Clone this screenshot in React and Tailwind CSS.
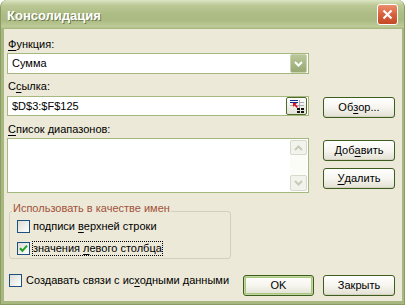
import React from "react";

function Mn({ children }) {
  return <span className="underline underline-offset-[2px]">{children}</span>;
}

function XpButton({ children, isDefault = false, width = "w-[72px]" }) {
  return (
    <button
      className={`${width} h-[21px] shrink-0 rounded-[3px] border border-[#3D5D1F] bg-gradient-to-b from-white via-[#F6F5EF] to-[#E2E0D2] text-[11px] leading-[13px] text-black flex items-center justify-center ${
        isDefault ? "shadow-[inset_0_0_0_1px_#C2D8A0,inset_0_0_0_2px_#A9C57F]" : "shadow-[inset_0_-1px_0_#D6D3C2]"
      }`}
    >
      {children}
    </button>
  );
}

function CheckBox({ checked = false }) {
  return (
    <span className="w-[13px] h-[13px] shrink-0 border border-[#1C5180] bg-gradient-to-br from-[#DCDCD5] to-white flex items-center justify-center">
      {checked && (
        <svg width="9" height="9" viewBox="0 0 9 9">
          <path d="M1 4.2 L3.4 6.8 L8 1.6" stroke="#21A121" strokeWidth="2" fill="none" />
        </svg>
      )}
    </span>
  );
}

function RefIcon() {
  return (
    <svg width="16" height="14" viewBox="0 0 16 14">
      <rect x="1" y="1" width="8" height="1" fill="#1B2A8A" />
      <rect x="1" y="3" width="8" height="1" fill="#1B2A8A" />
      <rect x="1" y="6" width="14" height="1" fill="#A9ADB5" />
      <rect x="10" y="3" width="5" height="1" fill="#A9ADB5" />
      <rect x="10" y="1" width="1" height="12" fill="#A9ADB5" />
      <rect x="8" y="9" width="3" height="2" fill="#111" />
      <rect x="12" y="9" width="3" height="2" fill="#111" />
      <rect x="8" y="12" width="3" height="2" fill="#111" />
      <rect x="12" y="12" width="3" height="2" fill="#111" />
      <path d="M4 4 L8 4 L6.6 5.4 L9 7.8 L7.8 9 L5.4 6.6 L4 8 Z" fill="#E3111B" />
    </svg>
  );
}

function Chevron({ down = true, color = "white" }) {
  return (
    <svg width="9" height="6" viewBox="0 0 9 6">
      <path d={down ? "M1 1 L4.5 4.5 L8 1" : "M1 5 L4.5 1.5 L8 5"} stroke={color} strokeWidth="2" fill="none" />
    </svg>
  );
}

export default function App() {
  return (
    <div className="w-[405px] h-[305px] bg-white font-['Liberation_Sans',Arial,sans-serif] text-[11px] leading-[13px] text-black">
      <div className="w-full h-full flex flex-col rounded-t-[7px] bg-[#A7B780] border-x border-b border-[#8A9C64] overflow-hidden">
        {/* Title bar */}
        <div className="h-[29px] shrink-0 flex items-center justify-between pl-[6px] pr-[6px] bg-[linear-gradient(to_bottom,#DCE5C3_0%,#BCC996_18%,#AEBD86_45%,#ABBA82_70%,#BECB98_92%,#A3B37B_100%)]">
          <span className="text-white font-bold text-[13px] leading-[15px] pt-[1px] [text-shadow:1px_1px_0_#6D7C4C]">
            Консолидация
          </span>
          <button className="w-[21px] h-[21px] rounded-[3px] border border-white bg-gradient-to-b from-[#EA8E6E] via-[#D9603C] to-[#C44A26] flex items-center justify-center">
            <svg width="11" height="11" viewBox="0 0 11 11">
              <path d="M1.5 1.5 L9.5 9.5 M9.5 1.5 L1.5 9.5" stroke="white" strokeWidth="2.2" />
            </svg>
          </button>
        </div>

        {/* Body */}
        <div className="flex-1 ml-[3px] mr-[2px] mb-[3px] bg-[#ECE9D8] pl-[3px] pr-[7px] pt-[9px] flex flex-col">
          <div className="pl-[1px]">
            <Mn>Ф</Mn>ункция:
          </div>
          <div className="mt-[2px] w-[302px] h-[21px] border border-[#A5B97F] bg-white flex items-center pl-[4px] pr-[1px]">
            <span className="flex-1">Сумма</span>
            <span className="w-[17px] h-[19px] rounded-[2px] bg-gradient-to-b from-[#B9C69A] to-[#98A974] border border-[#C9D3AE] flex items-center justify-center">
              <Chevron />
            </span>
          </div>

          <div className="mt-[6px] pl-[1px]">
            С<Mn>с</Mn>ылка:
          </div>
          <div className="flex items-start">
            <div className="mt-[3px] w-[302px] h-[20px] border border-[#A5B97F] bg-white flex items-center pl-[4px] pr-[1px]">
              <span className="flex-1">$D$3:$F$125</span>
              <span className="w-[21px] h-[18px] rounded-[2px] border border-[#4E6B2C] bg-gradient-to-b from-white to-[#E4E2D6] flex items-center justify-center">
                <RefIcon />
              </span>
            </div>
            <div className="ml-[14px] mt-[4px]">
              <XpButton>
                Об<Mn>з</Mn>ор...
              </XpButton>
            </div>
          </div>

          <div className="mt-[5px] pl-[1px]">
            <Mn>С</Mn>писок диапазонов:
          </div>
          <div className="flex items-start">
            <div className="mt-[2px] w-[302px] h-[55px] border border-[#A5B97F] bg-white flex justify-end p-[1px]">
              <div className="w-[17px] flex flex-col bg-[#FBFBF8]">
                <span className="h-[15px] rounded-[2px] border border-[#D6DACB] bg-[#F3F3EE] flex items-center justify-center">
                  <Chevron down={false} color="#C6CAB8" />
                </span>
                <span className="flex-1" />
                <span className="h-[16px] rounded-[2px] border border-[#D6DACB] bg-[#F3F3EE] flex items-center justify-center">
                  <Chevron color="#C6CAB8" />
                </span>
              </div>
            </div>
            <div className="ml-[14px] mt-[4px] flex flex-col gap-[7px]">
              <XpButton>
                Доб<Mn>а</Mn>вить
              </XpButton>
              <XpButton>
                <Mn>У</Mn>далить
              </XpButton>
            </div>
          </div>

          {/* Group box */}
          <div className="relative mt-[18px] ml-[2px] w-[222px] h-[48px] rounded-[3px] border border-[#D0D0BF] pl-[7px] pt-[7px] flex flex-col gap-[7px]">
            <span className="absolute left-[2px] top-[-10px] px-[1px] bg-[#ECE9D8] text-[#A2513A]">
              Использовать в качестве имен
            </span>
            <div className="flex items-center">
              <CheckBox />
              <span className="ml-[2px] border border-transparent">
                подписи <Mn>в</Mn>ерхней строки
              </span>
            </div>
            <div className="flex items-center">
              <CheckBox checked />
              <span className="ml-[2px] border border-dotted border-black">
                значения <Mn>л</Mn>евого столбца
              </span>
            </div>
          </div>

          {/* Bottom row */}
          <div className="mt-[15px] flex items-start">
            <div className="ml-[2px] flex items-center">
              <CheckBox />
              <span className="ml-[4px]">
                Создавать связи с ис<Mn>х</Mn>одными данными
              </span>
            </div>
            <div className="ml-auto mt-[1px] flex gap-[9px]">
              <XpButton isDefault width="w-[71px]">
                OK
              </XpButton>
              <XpButton>Закрыть</XpButton>
            </div>
          </div>
        </div>
      </div>
    </div>
  );
}
